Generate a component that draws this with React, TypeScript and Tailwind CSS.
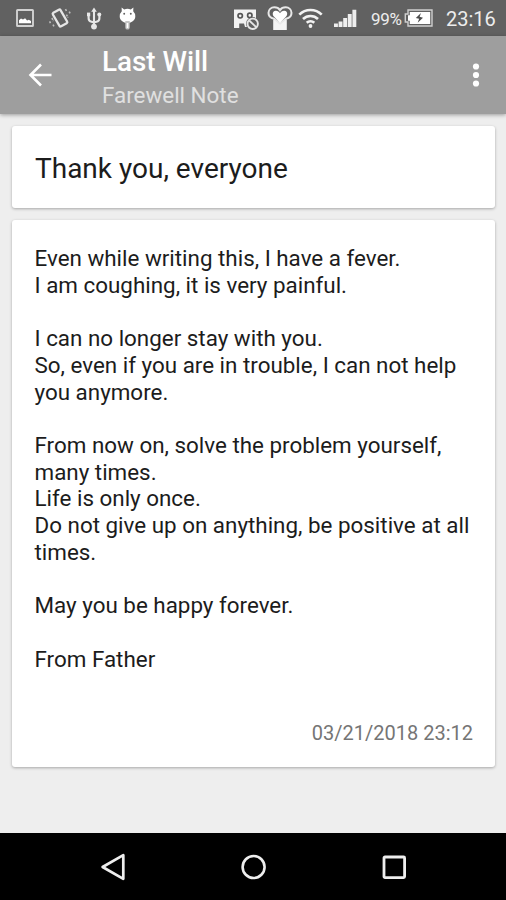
const noteLines = [
  "Even while writing this, I have a fever.",
  "I am coughing, it is very painful.",
  "",
  "I can no longer stay with you.",
  "So, even if you are in trouble, I can not help",
  "you anymore.",
  "",
  "From now on, solve the problem yourself,",
  "many times.",
  "Life is only once.",
  "Do not give up on anything, be positive at all",
  "times.",
  "",
  "May you be happy forever.",
  "",
  "From Father",
];

function PictureIcon() {
  return (
    <svg className="w-[18px] h-[18px]" viewBox="0 0 18 18" fill="none">
      <rect x="1" y="1" width="16" height="16" rx="0.6" stroke="#d2d2d2" strokeWidth="1.9" />
      <path d="M3 14.2v-3l2-1.6 2 .8 2.1-1.2 2 2.3 1.7-.7 2.2 1.2v2.2z" fill="#fff" />
    </svg>
  );
}

function VibrateIcon() {
  return (
    <svg className="w-[24px] h-[24px]" viewBox="0 0 24 24" fill="none" stroke="#e6e6e6">
      <rect x="7.6" y="4.2" width="8.8" height="15.6" rx="1.2" strokeWidth="2.3" transform="rotate(-30 12 12)" />
      <path d="M17.5 3.2l1.2 2.4M18.4 8.6l1.6 3M21.2 5.6l1.2 2.4M3.9 12l1.6 3M1.6 15.4l1.4 2.8M5 18.6l1.3 2.4" stroke="#bdbdbd" strokeWidth="1.6" strokeDasharray="2 1" />
    </svg>
  );
}

function UsbIcon() {
  return (
    <svg className="w-4 h-[23px]" viewBox="0 0 16 23" fill="none" stroke="#e8e8e8" strokeWidth="2.1">
      <path d="M8 4v16M2.6 8v3.2c0 2 1.2 3.2 3 3.6L8 15.6M13.4 8v3.2c0 2-1.2 3.2-3 3.6L8 15.6" />
      <path d="M8 .5l2.8 4.3H5.2z" fill="#e8e8e8" stroke="none" />
      <rect x="1" y="5.6" width="3.2" height="3.6" fill="#e8e8e8" stroke="none" />
      <circle cx="13.3" cy="7.5" r="2" fill="#e8e8e8" stroke="none" />
      <circle cx="8" cy="19.6" r="2.9" fill="#e8e8e8" stroke="none" />
    </svg>
  );
}

function DebugIcon() {
  return (
    <svg className="w-[17px] h-[23px]" viewBox="0 0 17 23">
      <path d="M2.6.4l2.6 2.2a8 8 0 0 1 6.6 0L14.4.4l-.2 3.8a7.2 7.2 0 0 1 2.1 5c0 3.9-3.4 6.7-7.8 6.7S.7 13.100.7 9.200a7.2 7.2 0 0 1 2.100-5z" fill="#fff" />
      <path d="M6.3 14h4.400v6.400a2.200 2.200 0 0 1-4.400 0z" fill="#c4c4c4" />
      <path d="M8.5 16v5" stroke="#fff" strokeWidth="1.6" />
      <circle cx="5.2" cy="6.7" r=".95" fill="#616161" />
      <circle cx="11.8" cy="6.7" r=".95" fill="#616161" />
    </svg>
  );
}

function BlockedIcon() {
  return (
    <svg className="w-[27px] h-[22px]" viewBox="0 0 27 22" fill="none">
      <path d="M1 .5h22V18H12l-1-3.500H6.200V19H1z" fill="#f2f2f2" />
      <circle cx="7.2" cy="6.8" r="2.2" stroke="#555" strokeWidth="1.7" />
      <circle cx="16.8" cy="6.4" r="2.2" stroke="#555" strokeWidth="1.7" />
      <circle cx="19.7" cy="14.8" r="6.7" fill="#616161" />
      <circle cx="19.7" cy="14.8" r="5.2" stroke="#e6e6e6" strokeWidth="1.9" />
      <path d="M16.2 11.5l7 6.7" stroke="#e6e6e6" strokeWidth="1.8" />
    </svg>
  );
}

function HeartIcon() {
  return (
    <svg className="w-[26px] h-[25px]" viewBox="0 0 26 25" fill="none">
      <path d="M6.2 13.5h13.6V24H6.2z" fill="#f4f4f4" />
      <path d="M13 17.5L7 12.8 C3 12 1.4 9.7 1.5 6.8 1.6 3.6 4 1.3 7.3 1.3c2.4 0 4.5 1 5.7 2.8 1.2-1.8 3.3-2.8 5.7-2.8 3.3 0 5.7 2.3 5.8 5.5.1 2.9-1.5 5.2-5.5 6z" fill="#616161" stroke="#e8e8e8" strokeWidth="2" />
      <path d="M13 16.8L7.1 10.8C4.9 8.4 5.5 5.1 8.4 4.7c2-.3 3.6.7 4.6 2.6 1-1.9 2.6-2.9 4.6-2.6 2.9.4 3.5 3.7 1.3 6.1z" fill="#fff" />
    </svg>
  );
}

function WifiIcon() {
  return (
    <svg className="w-[25px] h-[20px]" viewBox="0 0 25 20" fill="none" stroke="#f2f2f2" strokeWidth="2.6">
      <path d="M1.3 6.7c6.2-6.2 16.2-6.2 22.4 0M5 11c4.2-4.1 10.8-4.1 15 0M8.7 14.8c2.2-2 5.4-2 7.6 0" />
      <circle cx="12.5" cy="18" r="1.9" fill="#f2f2f2" stroke="none" />
    </svg>
  );
}

function SignalIcon() {
  return (
    <svg className="w-[24px] h-[19px]" viewBox="0 0 24 19" fill="#eeeeee">
      <path d="M1 14.6h3.9V18H1zM5.6 12.4h3.9V18H5.6zM10.2 9h3.9v9h-3.9zM14.8 5h3.9v13h-3.9zM19.4.8h3.9V18h-3.9z" />
    </svg>
  );
}

function BatteryIcon() {
  return (
    <svg className="w-[29px] h-[18px]" viewBox="0 0 29 18" fill="none">
      <path d="M4 1h24v16H4v-4H1.3V5H4z" stroke="#cfcfcf" strokeWidth="1.4" />
      <path d="M5.8 3h20.4v12H5.8v-3.3H4V6.3h1.8z" fill="#fff" />
      <path d="M17 3.9l-5.2 5 3.3.8-1.4 4 5.3-5-3.4-.9z" fill="#4d4d4d" />
    </svg>
  );
}

function StatusBar() {
  return (
    <div className="h-9 shrink-0 bg-[#616161] flex items-center pl-[16px] pr-[10px] text-[#ededed]">
      <PictureIcon />
      <div className="ml-[14px]"><VibrateIcon /></div>
      <div className="ml-[14px]"><UsbIcon /></div>
      <div className="ml-[17px]"><DebugIcon /></div>
      <div className="ml-auto mt-[3px]"><BlockedIcon /></div>
      <div className="ml-[7px]"><HeartIcon /></div>
      <div className="ml-[5px]"><WifiIcon /></div>
      <div className="ml-[10px]"><SignalIcon /></div>
      <span className="ml-[14px] mt-[2px] w-[31px] text-[17px] leading-5 tracking-[-0.3px] whitespace-nowrap">99%</span>
      <div className="ml-[2px]"><BatteryIcon /></div>
      <span className="ml-[13px] mt-[2px] w-[50px] text-[20px] leading-6 whitespace-nowrap">23:16</span>
    </div>
  );
}

function Toolbar() {
  return (
    <header className="relative h-[78px] shrink-0 bg-[#9e9e9e] flex items-center pl-[28px] pr-[26px] shadow-[0_1px_4px_rgba(0,0,0,0.35)]">
      <svg className="w-6 h-6" viewBox="0 0 24 24" fill="none" stroke="#fff" strokeWidth="2.6">
        <path d="M23.5 12H2.5M13 1.5L2.5 12 13 22.5" />
      </svg>
      <div className="ml-[50px] mt-[7px] flex-1">
        <h1 className="text-[27.8px] leading-[34px] font-medium text-white">Last Will</h1>
        <p className="text-[22.4px] leading-[33px] text-[#e0e0e0]">Farewell Note</p>
      </div>
      <svg className="w-2 h-6" viewBox="0 0 8 24" fill="#fff">
        <circle cx="4" cy="3.5" r="3.1" />
        <circle cx="4" cy="12" r="3.1" />
        <circle cx="4" cy="20.5" r="3.1" />
      </svg>
    </header>
  );
}

function NavBar() {
  return (
    <nav className="h-[67px] shrink-0 bg-black flex items-center text-[#eeeeee]">
      <svg className="w-[26px] h-[28px] ml-[100px]" viewBox="0 0 26 28" fill="none" stroke="currentColor" strokeWidth="2.7" strokeLinejoin="round">
        <path d="M2.6 14L23.3 2.2v23.6z" />
      </svg>
      <svg className="w-[26px] h-[26px] ml-[115px]" viewBox="0 0 26 26" fill="none" stroke="currentColor" strokeWidth="2.6">
        <circle cx="12.6" cy="13" r="11" />
      </svg>
      <svg className="w-6 h-6 ml-[115px]" viewBox="0 0 24 24" fill="none" stroke="currentColor" strokeWidth="2.8">
        <rect x="2" y="2" width="20.6" height="20.6" rx="1" />
      </svg>
    </nav>
  );
}

export default function App() {
  return (
    <div className="w-full h-screen flex flex-col overflow-hidden bg-[#eeeeee] font-['Roboto',sans-serif]">
      <StatusBar />
      <Toolbar />
      <main className="flex-1 min-h-0 flex flex-col gap-3 pt-3 pl-3 pr-[11px]">
        <section className="h-[82px] shrink-0 rounded-[3px] bg-white shadow-[0_1px_3px_rgba(0,0,0,0.3)] flex items-center px-[23px] pt-[4px]">
          <h2 className="text-[28px] leading-9 text-[#1c1c1c] whitespace-nowrap">Thank you, everyone</h2>
        </section>
        <section className="h-[547px] shrink-0 rounded-[3px] bg-white shadow-[0_1px_3px_rgba(0,0,0,0.3)] flex flex-col justify-between pt-[25.3px] pb-[20px] px-[22px]">
          <div className="pl-[0.5px] text-[22.4px] leading-[26.7px] text-[#1c1c1c] whitespace-nowrap">
            {noteLines.map((line, i) => (
              <p key={i} className="h-[26.7px]">{line}</p>
            ))}
          </div>
          <time className="self-end text-[20px] leading-7 text-[#757575]">03/21/2018 23:12</time>
        </section>
      </main>
      <NavBar />
    </div>
  );
}
